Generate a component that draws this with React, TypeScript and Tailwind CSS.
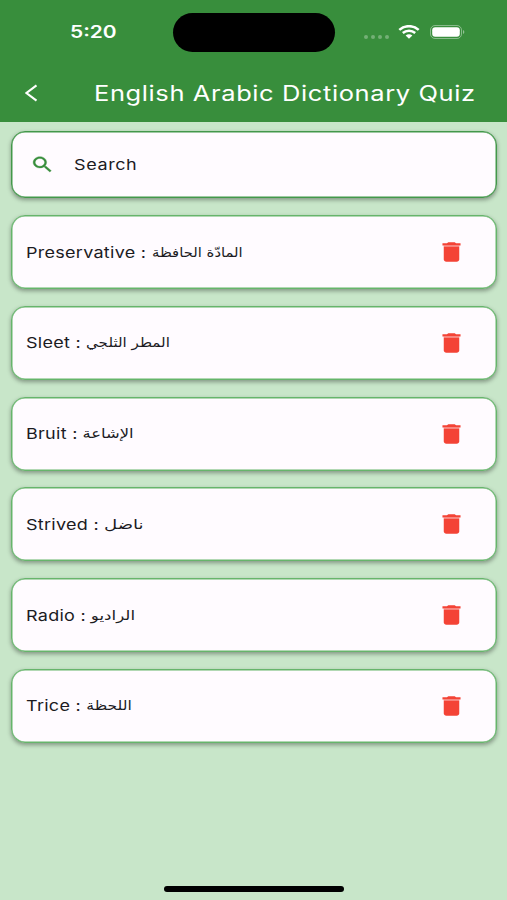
import { clsx } from 'clsx'

interface Word {
  english: string
  arabic: string
  stretch: string
}

const words: Word[] = [
  { english: 'Preservative', arabic: 'المادّة الحافظة', stretch: 'scale-x-[0.95]' },
  { english: 'Sleet', arabic: 'المطر الثلجي', stretch: 'scale-x-[0.97]' },
  { english: 'Bruit', arabic: 'الإشاعة', stretch: 'scale-x-[1.05]' },
  { english: 'Strived', arabic: 'ناضل', stretch: 'scale-x-[1.16]' },
  { english: 'Radio', arabic: 'الراديو', stretch: 'scale-x-[1.07]' },
  { english: 'Trice', arabic: 'اللحظة', stretch: 'scale-x-100' },
]

function StatusBar() {
  return (
    <div className="flex h-[64px] items-center">
      <div className="w-[173px] pl-[69.5px]">
        <span className="inline-block origin-left scale-x-[1.23] text-[17px] font-semibold leading-none">5:20</span>
      </div>
      <div className="h-[39px] w-[162px] rounded-full bg-black" />
      <div className="ml-[29px] flex items-center">
        <div className="mt-[9px] flex gap-[3px]">
          {[0, 1, 2, 3].map((dot) => (
            <div key={dot} className="h-[4px] w-[4px] rounded-full bg-white/30" />
          ))}
        </div>
        <svg className="ml-[9px]" width="22" height="14" viewBox="0 0 22 14" fill="none">
          <path d="M1.3 4.9C6.7-.1 15.3-.1 20.7 4.9" stroke="white" strokeWidth="2.5" />
          <path d="M4.8 8C8.3 4.9 13.7 4.9 17.2 8" stroke="white" strokeWidth="2.4" />
          <path d="M7.6 10.5C9.6 8.8 12.4 8.8 14.4 10.5L11 13.7Z" fill="white" />
        </svg>
        <svg className="ml-[10px]" width="36" height="14" viewBox="0 0 36 14" fill="none">
          <rect x="0.5" y="0.5" width="31" height="13" rx="4.5" stroke="white" strokeOpacity="0.4" />
          <rect x="2.2" y="2.2" width="27.6" height="9.6" rx="3" fill="white" />
          <path d="M33 5v4c1.8-.6 1.8-3.4 0-4Z" fill="white" fillOpacity="0.45" />
        </svg>
      </div>
    </div>
  )
}

function TrashIcon() {
  return (
    <svg width="31" height="26" viewBox="0 0 24 24" preserveAspectRatio="none" fill="#f44336">
      <path d="M6 19c0 1.1.9 2 2 2h8c1.1 0 2-.9 2-2V7H6z" />
      <path d="M19 4h-3.5l-1-1h-5l-1 1H5v2h14z" />
      <path d="M6 6h12v1H6z" opacity="0.5" />
    </svg>
  )
}

export default function App() {
  return (
    <div className="flex h-[900px] w-[507px] flex-col overflow-hidden bg-[#c8e6c9] font-['Inter','DejaVu_Sans',sans-serif]">
      <header className="h-[122px] shrink-0 bg-[#388e3c] text-white">
        <StatusBar />
        <div className="flex h-[58px] items-center pl-[25px]">
          <svg width="13" height="18" viewBox="0 0 13 18" fill="none">
            <path d="M11.5 1.3L1.5 9l10 7.7" stroke="white" strokeWidth="2.1" />
          </svg>
          <h1 className="ml-[56px] origin-left scale-x-[1.213] whitespace-nowrap text-[21px] leading-none tracking-[0.5px]">
            English Arabic Dictionary Quiz
          </h1>
        </div>
      </header>

      <main className="flex flex-1 flex-col pl-[11px] pr-[10px] pt-[8.5px]">
        <div className="flex h-[67.5px] shrink-0 items-center rounded-[14px] border border-[#43984a] bg-[#fffbff] pl-[17.5px] shadow-[0_2px_4px_rgba(0,0,0,0.35),inset_0_0_0_0.5px_#43984a]">
          <svg className="mt-[1px]" width="25" height="21" viewBox="0 0 24 24" preserveAspectRatio="none" fill="#388e3c" stroke="#388e3c" strokeWidth="0.3">
            <path d="M15.5 14h-.79l-.28-.27C15.41 12.59 16 11.11 16 9.5 16 5.91 13.09 3 9.5 3S3 5.91 3 9.5 5.91 16 9.5 16c1.61 0 3.09-.59 4.23-1.57l.27.28v.79l5 4.99L20.49 19l-4.99-5zm-6 0C7.01 14 5 11.99 5 9.5S7.01 5 9.5 5 14 7.01 14 9.5 11.99 14 9.5 14z" />
          </svg>
          <span className="ml-[19px] origin-left scale-x-[1.2] text-[15px] leading-none tracking-[0.5px] text-[#1c1b1f]">Search</span>
        </div>

        <ul className="mt-[17px] flex flex-col gap-[16.8px]">
          {words.map((word) => (
            <li
              key={word.english}
              className="flex h-[74px] items-center justify-between rounded-[14px] border border-[#66b56b] bg-[#fffbff] pl-[13.5px] pr-[29px] shadow-[0_2px_4px_rgba(0,0,0,0.35),inset_0_0_0_0.5px_#66b56b]"
            >
              <p className="flex origin-left scale-x-[1.2] items-center whitespace-pre text-[15px] leading-none text-[#1c1b1f]">
                <span className="tracking-[0.23px]">{word.english} : </span>
                <span dir="rtl" className={clsx("origin-left font-['DejaVu_Sans',sans-serif] text-[13px]", word.stretch)}>
                  {word.arabic}
                </span>
              </p>
              <TrashIcon />
            </li>
          ))}
        </ul>
      </main>

      <div className="mx-auto mb-[8.5px] h-[5.5px] w-[180px] shrink-0 rounded-full bg-black" />
    </div>
  )
}
